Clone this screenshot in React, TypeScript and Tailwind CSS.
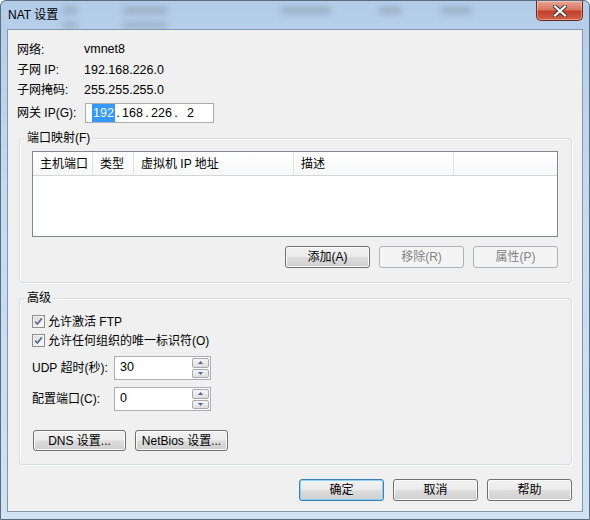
import type { ReactNode } from 'react';

const btnBase =
  'flex h-[22px] w-[85px] items-center justify-center rounded-[3px] border text-[12px] leading-none';
const btnNormal = `${btnBase} border-[#707070] bg-[linear-gradient(180deg,#f2f2f2_0%,#ebebeb_48%,#dddddd_52%,#cfcfcf_100%)] text-black shadow-[inset_0_0_0_1px_#fbfbfb]`;
const btnDefault = `${btnBase} border-[#3c7fb1] bg-[linear-gradient(180deg,#f2f2f2_0%,#ebebeb_48%,#dddddd_52%,#cfcfcf_100%)] text-black shadow-[inset_0_0_0_1px_#8ed1f7]`;
const btnDisabled = `${btnBase} border-[#adb2b5] bg-[#f4f4f4] text-[#838383]`;

const columns = [
  { label: '主机端口', width: 'w-[60px]' },
  { label: '类型', width: 'w-[41px]' },
  { label: '虚拟机 IP 地址', width: 'w-[160px]' },
  { label: '描述', width: 'w-[160px]' },
];

function Group({ title, className, children }: { title: string; className: string; children: ReactNode }) {
  return (
    <div
      className={`relative rounded-[3px] border border-[#d5dfe5] shadow-[inset_1px_1px_0_#ffffff,1px_1px_0_#ffffff] ${className}`}
    >
      <span className="absolute -top-[8px] left-[5px] bg-[#f0f0f0] px-[2px] leading-[14px]">{title}</span>
      {children}
    </div>
  );
}

function CheckBox({ label }: { label: string }) {
  return (
    <div className="flex h-[19px] items-center gap-[3px]">
      <span className="flex h-[13px] w-[13px] items-center justify-center border border-[#8f8f8f] bg-[linear-gradient(135deg,#d6d6d6,#ffffff)] shadow-[inset_0_0_0_1px_#f4f4f4]">
        <svg width="9" height="9" viewBox="0 0 9 9" aria-hidden="true">
          <path d="M1.2 4.6 L3.4 7 L7.8 1.4" stroke="#5a6b92" strokeWidth="1.7" fill="none" />
        </svg>
      </span>
      <span>{label}</span>
    </div>
  );
}

function SpinArrow({ up }: { up?: boolean }) {
  return (
    <span className="flex flex-1 items-center justify-center rounded-[2px] border border-[#a9a9a9] bg-[linear-gradient(180deg,#f6f6f6,#dedede)]">
      <svg width="5" height="3" viewBox="0 0 5 3" aria-hidden="true">
        <path d={up ? 'M0 3 L2.5 0 L5 3 Z' : 'M0 0 L2.5 3 L5 0 Z'} fill="#4d6a9c" />
      </svg>
    </span>
  );
}

function SpinBox({ label, value }: { label: string; value: string }) {
  return (
    <div className="flex h-[24px] items-center">
      <span className="w-[82px]">{label}</span>
      <div className="flex h-[24px] w-[97px] border border-[#abadb3] bg-white">
        <span className="flex-1 pl-[5px] pt-[3px] text-[12.5px] leading-[14px]">{value}</span>
        <div className="my-[1px] mr-[1px] flex w-[17px] flex-col gap-[1px]">
          <SpinArrow up />
          <SpinArrow />
        </div>
      </div>
    </div>
  );
}

export default function App() {
  return (
    <div className="relative flex h-[520px] w-[590px] flex-col overflow-hidden rounded-t-[6px] border border-[#5d6d80] bg-[linear-gradient(180deg,#b3cce8_0%,#c5daf0_35%,#d0e2f4_100%)] font-[family-name:'Liberation_Sans','Noto_Sans_CJK_SC',sans-serif] text-[12px] text-black">
      {/* blurred desktop behind the glass */}
      <div className="pointer-events-none absolute inset-x-0 top-0 h-[30px] opacity-25 blur-[3px]">
        <span className="absolute left-[62px] top-[6px] h-[7px] w-[14px] bg-[#4c5660]" />
        <span className="absolute left-[122px] top-[6px] h-[7px] w-[44px] bg-[#4c5660]" />
        <span className="absolute left-[280px] top-[6px] h-[7px] w-[50px] bg-[#4c5660]" />
        <span className="absolute left-[378px] top-[6px] h-[7px] w-[22px] bg-[#4c5660]" />
        <span className="absolute left-[440px] top-[6px] h-[7px] w-[30px] bg-[#4c5660]" />
        <span className="absolute left-[62px] top-[21px] h-[6px] w-[14px] bg-[#4c5660]" />
        <span className="absolute left-[122px] top-[21px] h-[6px] w-[44px] bg-[#4c5660]" />
      </div>

      <div className="relative flex h-[28px] items-start justify-between">
        <span className="pl-[7px] pt-[6px] leading-[16px]">NAT 设置</span>
        <div className="mr-[6px] flex h-[20px] w-[47px] items-center justify-center rounded-b-[5px] border border-t-0 border-[#6b2a1f] bg-[linear-gradient(180deg,#eaa796_0%,#d87560_45%,#c4402a_55%,#d36148_100%)] shadow-[inset_0_0_0_1px_rgba(255,255,255,0.35)]">
          <svg width="14" height="12" viewBox="0 0 14 12" aria-hidden="true">
            <path d="M2 1.5 L12 10.5 M12 1.5 L2 10.5" stroke="#3a3a3a" strokeWidth="4.2" strokeLinecap="square" />
            <path d="M2 1.5 L12 10.5 M12 1.5 L2 10.5" stroke="#ffffff" strokeWidth="2.2" strokeLinecap="square" />
          </svg>
        </div>
      </div>

      <div className="relative mx-[6px] flex h-[483px] flex-col border border-[#8397ad] bg-[#f0f0f0]">
        <div className="grid grid-cols-[67px_1fr] pl-[9px] pt-[9px]">
          <span className="flex h-[21px] items-center">网络:</span>
          <span className="flex h-[21px] items-center text-[12.5px]">vmnet8</span>
          <span className="flex h-[20px] items-center">子网 IP:</span>
          <span className="flex h-[20px] items-center text-[12.5px]">192.168.226.0</span>
          <span className="flex h-[20px] items-center">子网掩码:</span>
          <span className="flex h-[20px] items-center text-[12.5px]">255.255.255.0</span>
          <span className="mt-[3px] flex h-[20px] items-center">网关 IP(G):</span>
          <div className="ml-px mt-[3px] flex h-[20px] w-[129px] items-center border border-[#abadb3] bg-white pl-[6px] text-[12.5px]">
            <span className="flex w-[23px] justify-center">
              <span className="bg-[#3399ff] px-px text-white">192</span>
            </span>
            <span className="w-[6px] text-center">.</span>
            <span className="w-[23px] text-center">168</span>
            <span className="w-[6px] text-center">.</span>
            <span className="w-[23px] text-center">226</span>
            <span className="w-[6px] text-center">.</span>
            <span className="w-[23px] text-center">2</span>
          </div>
        </div>

        <Group title="端口映射(F)" className="ml-[11px] mt-[15px] h-[145px] w-[553px] pl-[12px] pt-[12px]">
          <div className="h-[86px] w-[526px] border border-[#828790] bg-white">
            <div className="flex h-[24px] border-b border-[#d5d5d5] bg-[linear-gradient(180deg,#ffffff,#f7f8f9)]">
              {columns.map((col) => (
                <span
                  className={`flex items-center border-r border-[#e3e3e3] pl-[7px] ${col.width}`}
                  key={col.label}
                >
                  {col.label}
                </span>
              ))}
            </div>
          </div>
          <div className="mt-[9px] flex w-[526px] justify-end gap-[9px]">
            <button className={btnNormal} type="button">
              添加(A)
            </button>
            <button className={btnDisabled} type="button" disabled>
              移除(R)
            </button>
            <button className={btnDisabled} type="button" disabled>
              属性(P)
            </button>
          </div>
        </Group>

        <Group title="高级" className="ml-[11px] mt-[15px] h-[167px] w-[553px] pl-[12px] pt-[13px]">
          <CheckBox label="允许激活 FTP" />
          <CheckBox label="允许任何组织的唯一标识符(O)" />
          <div className="mt-[6px] flex flex-col gap-[7px]">
            <SpinBox label="UDP 超时(秒):" value="30" />
            <SpinBox label="配置端口(C):" value="0" />
          </div>
          <div className="mt-[19px] flex gap-[9px] pl-px">
            <button className={`${btnNormal} !h-[21px] !w-[93px]`} type="button">
              DNS 设置...
            </button>
            <button className={`${btnNormal} !h-[21px] !w-[93px]`} type="button">
              NetBios 设置...
            </button>
          </div>
        </Group>

        <div className="mt-[14px] flex justify-end gap-[9px] pr-[10px]">
          <button className={btnDefault} type="button">
            确定
          </button>
          <button className={btnNormal} type="button">
            取消
          </button>
          <button className={btnNormal} type="button">
            帮助
          </button>
        </div>
      </div>
    </div>
  );
}
